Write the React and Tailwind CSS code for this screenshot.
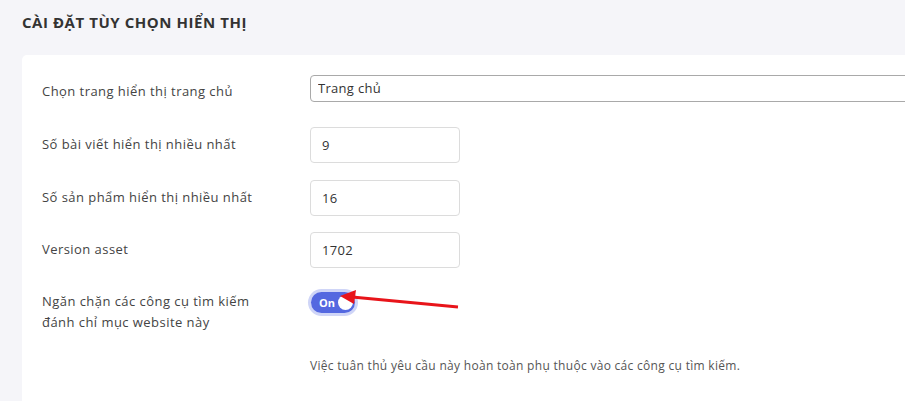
import React, { useState } from 'react';

const font = { fontFamily: '"Open Sans", "Noto Sans", sans-serif' };

const Row = ({ label, children, className = '', labelClass = '' }) => (
  <div className={`flex items-center ${className}`}>
    <div className={`w-[268px] shrink-0 text-[13px] tracking-[0.45px] text-[#444] ${labelClass}`}>{label}</div>
    {children}
  </div>
);

const TextInput = ({ value }) => (
  <input
    defaultValue={value}
    className="w-[150px] h-[36px] rounded-[4px] border border-[#dcdcdc] bg-white px-[11px] text-[13px] tracking-[0.3px] text-[#333] outline-none"
  />
);

export default function App() {
  const [on, setOn] = useState(true);

  return (
    <div className="min-h-[401px] bg-[#f5f5f9] pl-[22px] overflow-hidden relative" style={font}>
      <h1 className="pt-[11px] h-[55px] text-[15px] font-bold text-[#333] tracking-[0.55px]">
        CÀI ĐẶT TÙY CHỌN HIỂN THỊ
      </h1>

      <div className="bg-white rounded-tl-[5px] pl-[20px] pt-[20px] pb-[30px] min-h-[346px]">
        <Row label="Chọn trang hiển thị trang chủ" className="mb-[25px]" labelClass="pt-[7px]">
          <select className="h-[27px] w-[620px] shrink-0 rounded-[4px] border border-[#a9a9a9] bg-white px-[7px] text-[13px] tracking-[0.3px] text-[#333] appearance-none outline-none">
            <option>Trang chủ</option>
          </select>
        </Row>

        <Row label="Số bài viết hiển thị nhiều nhất" className="mb-[17px]">
          <TextInput value="9" />
        </Row>
        <Row label="Số sản phẩm hiển thị nhiều nhất" className="mb-[16px]">
          <TextInput value="16" />
        </Row>
        <Row label="Version asset" className="mb-[22px]">
          <TextInput value="1702" />
        </Row>

        <div className="flex items-start">
          <div className="w-[268px] shrink-0 pt-[1px] text-[13px] leading-[21px] tracking-[0.45px] text-[#444]">
            Ngăn chặn các công cụ tìm kiếm
            <br />
            đánh chỉ mục website này
          </div>
          <button
            onClick={() => setOn(!on)}
            className="mt-[2px] ml-[1px] flex items-center w-[44px] h-[21px] rounded-full bg-[#5468e0] ring-[3px] ring-[#cfd5f7] pl-[8px] pr-[2px] justify-between"
          >
            <span className="text-[11px] font-bold text-white leading-none">On</span>
            <span className="w-[15px] h-[15px] rounded-full bg-white" />
          </button>
        </div>

        <p className="mt-[24px] ml-[268px] text-[12px] tracking-[0.3px] text-[#555]">
          Việc tuân thủ yêu cầu này hoàn toàn phụ thuộc vào các công cụ tìm kiếm.
        </p>
      </div>

      <svg className="absolute left-0 top-0 pointer-events-none" width="905" height="401">
        <line x1="458" y1="307" x2="352" y2="297" stroke="#e8141a" strokeWidth="3" />
        <polygon points="340,296 356,290 354,304" fill="#e8141a" />
      </svg>
    </div>
  );
}
